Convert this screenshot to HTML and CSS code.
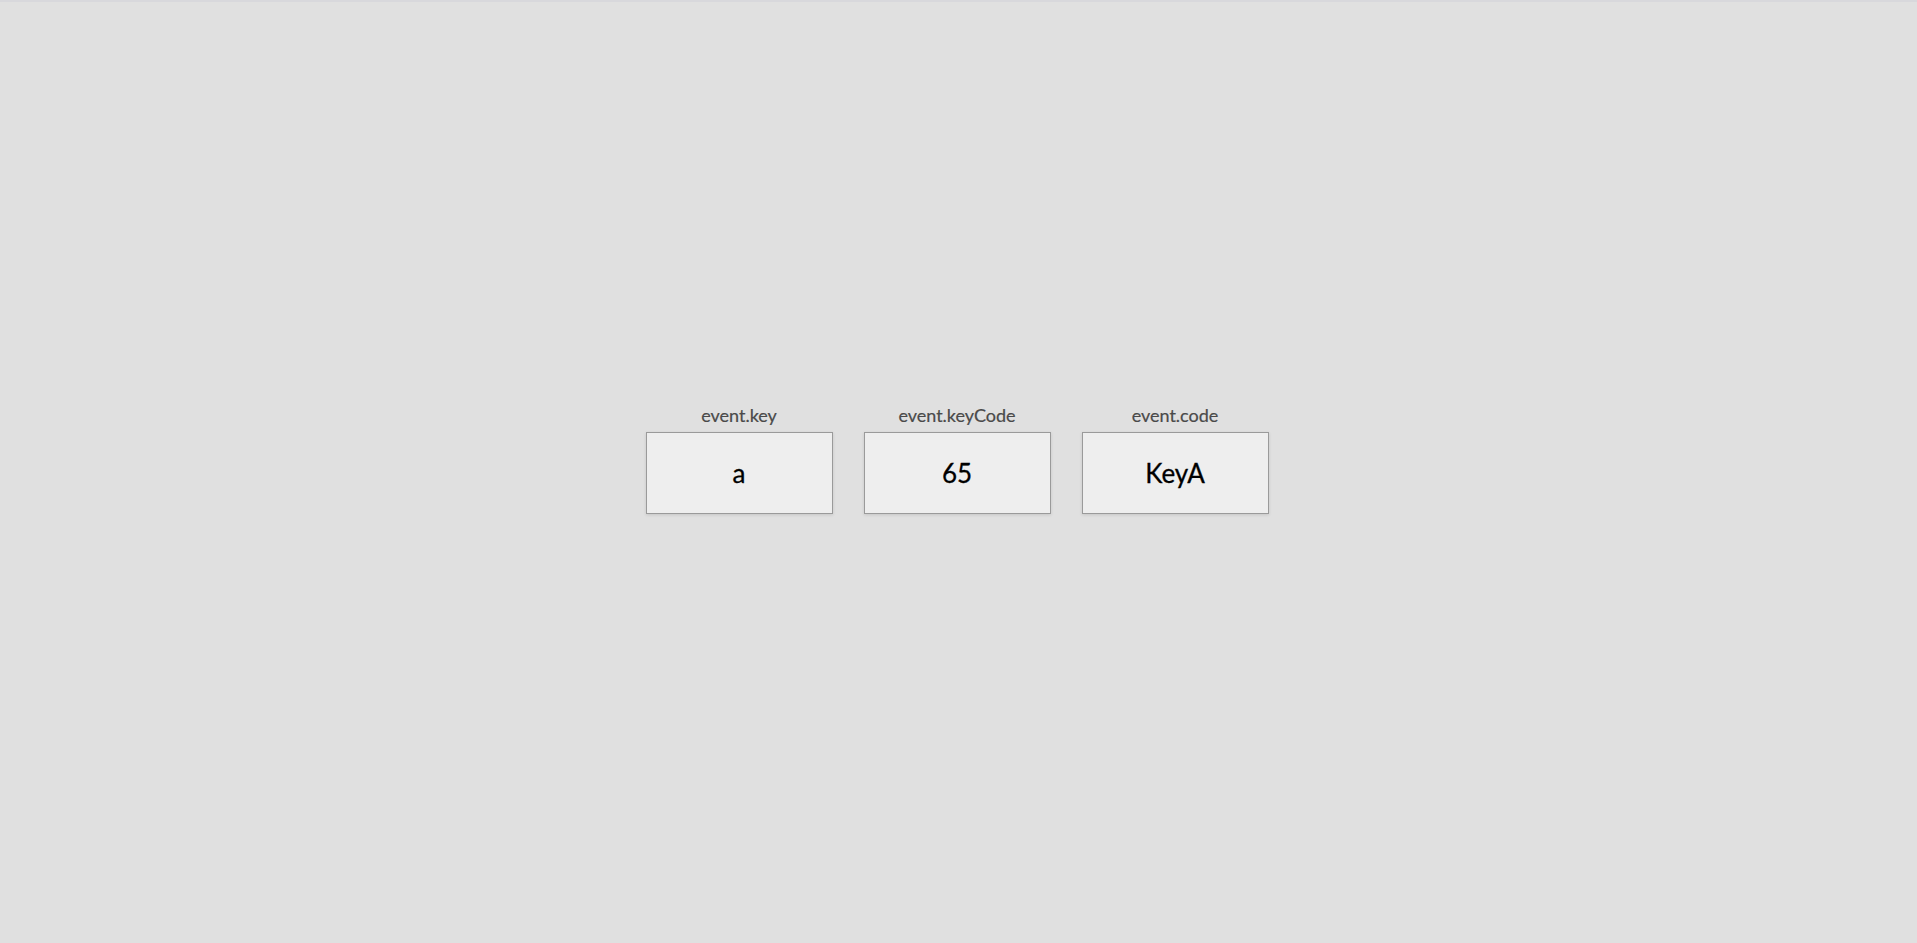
FILE: index.html
```html
<!DOCTYPE html>
<html lang="en">
<head>
<meta charset="utf-8">
<title>Key codes</title>
<link rel="stylesheet" href="styles.css">
</head>
<body>
<div class="topline"></div>
<main class="stage">
  <div class="keys">
    <div class="key">
      <div class="key-label">event.key</div>
      <div class="key-box">a</div>
    </div>
    <div class="key">
      <div class="key-label">event.keyCode</div>
      <div class="key-box">65</div>
    </div>
    <div class="key">
      <div class="key-label">event.code</div>
      <div class="key-box">KeyA</div>
    </div>
  </div>
</main>
</body>
</html>
```
FILE: styles.css
```css
html, body {
  margin: 0;
  padding: 0;
  height: 100%;
}
body {
  background: #e0e0e0;
  font-family: Lato, "Open Sans", sans-serif;
  display: flex;
  flex-direction: column;
}
.topline {
  height: 2px;
  background: #d8d8dc;
  flex: none;
}
.stage {
  flex: 1;
  display: flex;
  align-items: center;
  justify-content: center;
  padding-bottom: 26px;
  padding-right: 3px;
}
.keys {
  display: flex;
  gap: 31px;
}
.key {
  display: flex;
  flex-direction: column;
  align-items: center;
}
.key-label {
  font-size: 18px;
  color: #4a4a4a;
  line-height: 20px;
  margin-bottom: 7px;
  -webkit-text-stroke: 0.2px #4a4a4a;
}
.key-box {
  box-sizing: border-box;
  width: 187px;
  height: 82px;
  border: 1px solid #9a9a9a;
  background: #eeeeee;
  box-shadow: 0 1px 3px rgba(0,0,0,0.12);
  display: flex;
  align-items: center;
  justify-content: center;
  font-size: 26px;
  color: #000;
  -webkit-text-stroke: 0.3px #000;
}
```
